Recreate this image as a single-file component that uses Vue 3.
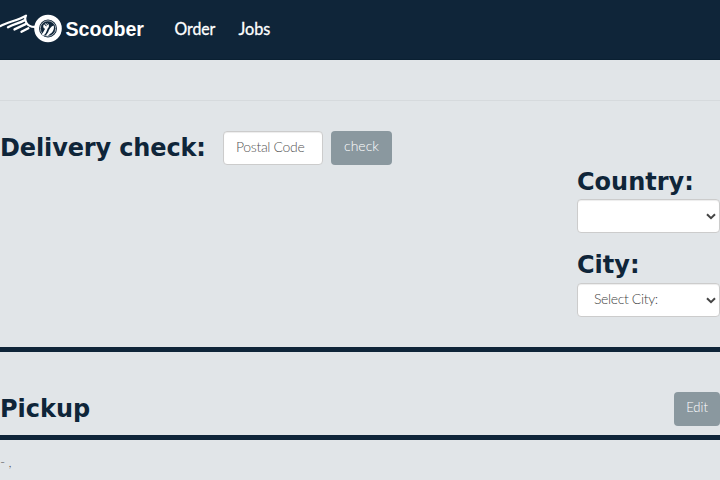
<script setup>
import { ref } from 'vue'

const links = [
  { label: 'Order', width: 41 },
  { label: 'Jobs', width: 32 },
]
const postalCode = ref('')
const country = ref('')
const city = ref('')
</script>

<template>
  <div class="page">
    <header class="navbar">
      <svg class="logo" viewBox="0 0 150 60" aria-label="Scoober">
        <g fill="none" stroke="#fff" stroke-linecap="round" stroke-linejoin="round">
          <path d="M0.5 26C8 22 18 20.5 26 15.6C23.8 20 26.5 27.2 35 26.9" stroke-width="2.2" />
          <path d="M8 27.2C14 24 20 23 24.5 20.2M14.5 29.4L25.6 24.2M21.5 31.7L28.3 28.3" stroke-width="2.4" />
          <circle cx="48" cy="28.5" r="11.4" stroke-width="4.8" />
        </g>
        <circle cx="48" cy="28.5" r="7.7" fill="none" stroke="#fff" stroke-width=".6" />
        <path d="M44 24.2l2.2 2.2.6-.6-2-2.1.6-.4 2.2 2 .5-.7-1.9-1.7c2.2.3 3.2 2 2.6 4l-1.1 1.6-2 4.7-2.4 2.6-1.4-1.3 3.2-5.7c-1.9-.6-2.6-2.8-1.1-4.6z" fill="#fff" />
        <path d="M53.6 25.4c-2.7.9-4.8 4.3-5.5 6.8l-2.3 3.2 1.9.6 2.5-2.2c3-1.8 4.5-5.6 3.4-8.4z" fill="#fff" />
        <text x="65.5" y="35.6" textLength="78.5" lengthAdjust="spacingAndGlyphs" class="brand">Scoober</text>
      </svg>
      <nav class="links">
        <a v-for="link in links" :key="link.label">
          <svg :width="link.width + 2" height="24">
            <text x="0.4" y="17" :textLength="link.width" lengthAdjust="spacingAndGlyphs">{{ link.label }}</text>
          </svg>
        </a>
      </nav>
    </header>
    <div class="strip"></div>

    <main>
      <section class="delivery">
        <h3>Delivery check:</h3>
        <input v-model="postalCode" class="control postal" placeholder="Postal Code" />
        <button class="btn check">check</button>
      </section>
      <section class="location">
        <h3>Country:</h3>
        <div class="control select">
          <span>{{ country }}</span>
          <svg class="arrow" viewBox="0 0 10 7"><path d="M1 1.2L5 5.2L9 1.2" /></svg>
        </div>
        <h3 class="city">City:</h3>
        <div class="control select">
          <span>{{ city || 'Select City:' }}</span>
          <svg class="arrow" viewBox="0 0 10 7"><path d="M1 1.2L5 5.2L9 1.2" /></svg>
        </div>
      </section>
      <section class="pickup">
        <h3>Pickup</h3>
        <button class="btn edit">Edit</button>
      </section>
      <p class="address">- <i>,</i></p>
    </main>
  </div>
</template>

<style>
body {
  background: #e1e5e8;
}
</style>

<style scoped>
.page, .page * {
  box-sizing: border-box;
}
.page {
  width: 100%;
  height: 480px;
  overflow: hidden;
  background: #e1e5e8;
  color: #555;
  font: 300 14px/20px Lato, sans-serif;
}
.navbar {
  display: flex;
  height: 60px;
  background: #0f2539;
  border-bottom: 1px solid #0a2032;
}
.logo {
  width: 150px;
  height: 60px;
  flex: none;
}
.brand {
  font: bold 19.5px "Liberation Sans", sans-serif;
  fill: #fff;
}
.links {
  display: flex;
  gap: 21px;
  padding: 18px 0 0 24px;
}
.links svg {
  display: block;
  overflow: visible;
}
.links text {
  fill: #fff;
  stroke: #fff;
  stroke-width: .3px;
  font: 400 17px Lato, sans-serif;
}
.strip {
  height: 41px;
  border-bottom: 1px solid #d6dadd;
}
h3 {
  margin: 0;
  font: bold 24px/26px "DejaVu Sans", sans-serif;
  color: #0f2539;
}
.delivery {
  display: flex;
  align-items: center;
  height: 34px;
  margin-top: 30px;
}
.delivery h3 {
  width: 223px;
  padding-bottom: 1px;
  letter-spacing: -.13px;
}
.control {
  height: 34px;
  border: 1px solid #ccc;
  border-radius: 4px;
  background: #fff;
  color: #444;
  font: 300 14px/20px Lato, sans-serif;
  box-shadow: inset 0 1px 1px rgba(0, 0, 0, .075);
}
.postal {
  width: 100px;
  padding: 4px 12px 8px;
  letter-spacing: -.33px;
}
.postal::placeholder {
  color: #555;
  opacity: 1;
}
.btn {
  height: 34px;
  padding: 4px 0 8px;
  border: 0;
  border-radius: 4px;
  background: #8a989f;
  color: #fff;
  font: 300 14px/20px Lato, sans-serif;
}
.check {
  width: 61px;
  margin-left: 8px;
}
.location {
  width: 143px;
  margin: 4px 0 30px auto;
}
.location h3 {
  height: 30px;
}
.location .city {
  height: 31px;
  margin-top: 19px;
}
.select {
  display: flex;
  justify-content: space-between;
  padding: 5px 3px 7px 16px;
  letter-spacing: -.35px;
}
.arrow {
  width: 10px;
  height: 7px;
  margin-top: 8px;
}
.arrow path {
  fill: none;
  stroke: #444;
  stroke-width: 2;
}
.pickup {
  display: flex;
  justify-content: space-between;
  height: 93px;
  padding-top: 40px;
  border-top: 5px solid #0f2539;
  border-bottom: 5px solid #0f2539;
}
.pickup h3 {
  margin-top: 4px;
}
.edit {
  width: 46px;
  font-size: 13px;
}
.address {
  margin: 12px 0 0;
}
</style>
